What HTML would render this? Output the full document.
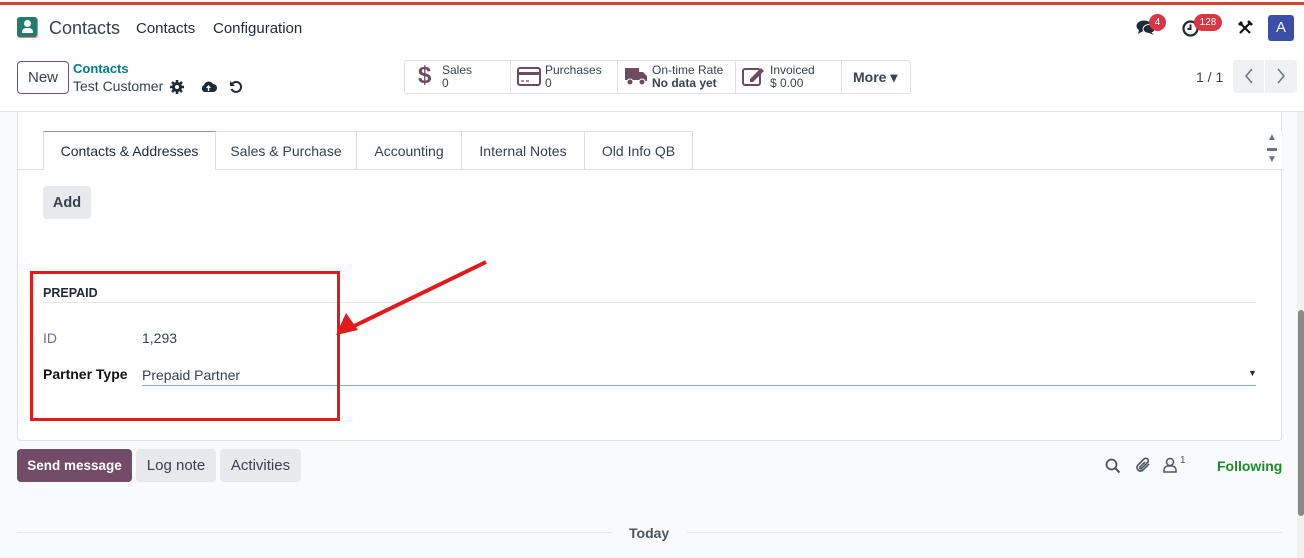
<!DOCTYPE html>
<html><head><meta charset="utf-8"><style>
*{box-sizing:border-box;margin:0;padding:0}
body{width:1304px;height:558px;overflow:hidden;background:#f9fafb;font-family:"Liberation Sans",sans-serif;color:#374151;position:relative;font-size:14px}
.a{position:absolute;white-space:nowrap}
.btn{position:absolute;border-radius:4px;display:flex;align-items:center;justify-content:center;font-size:14px}
</style></head><body>
<div class="a" style="left:0;top:0;width:1304px;height:112px;background:#fff;border-bottom:1px solid #dee2e6"></div>
<div class="a" style="left:0;top:2px;width:1304px;height:3px;background:#d9442e"></div>
<div class="a" style="left:17px;top:17px;width:21px;height:21px;background:#f07c7c;border-radius:3px"></div>
<div class="a" style="left:17px;top:17px;width:20px;height:20px;background:#1f7d6e;border-radius:3px"></div>
<div class="a" style="left:24px;top:20px;width:7px;height:7px;background:#fff;border-radius:50%"></div>
<div class="a" style="left:22px;top:28px;width:11px;height:5px;background:#fff;border-radius:4px 4px 1px 1px"></div>
<div class="a" style="left:49px;top:18px;font-size:18px;color:#374151">Contacts</div>
<div class="a" style="left:136px;top:20px;font-size:15px;color:#1f2937">Contacts</div>
<div class="a" style="left:213px;top:20px;font-size:15px;color:#1f2937">Configuration</div>
<svg class="a" style="left:1136px;top:19px" width="20" height="18" viewBox="0 0 20 18"><ellipse cx="8" cy="7" rx="7.5" ry="5.5" fill="#1f2937"/><path d="M3 11 L2 15 L7 12Z" fill="#1f2937"/><ellipse cx="13" cy="10" rx="6" ry="4.5" fill="#1f2937" stroke="#fff" stroke-width="1"/><path d="M15 13 L18 16 L13 14Z" fill="#1f2937"/></svg>
<div class="a" style="left:1149px;top:14px;width:17px;height:17px;border-radius:9px;background:#dc3545;color:#fff;font-size:10px;text-align:center;line-height:17px">4</div>
<svg class="a" style="left:1182px;top:20px" width="17" height="17" viewBox="0 0 17 17"><circle cx="8.5" cy="8.5" r="7" fill="none" stroke="#1f2937" stroke-width="2.2"/><path d="M8.5 4.5V9H5.5" fill="none" stroke="#1f2937" stroke-width="2"/></svg>
<div class="a" style="left:1194px;top:14px;width:28px;height:17px;border-radius:9px;background:#dc3545;color:#fff;font-size:10px;text-align:center;line-height:17px">128</div>
<svg class="a" style="left:1237px;top:20px" width="16" height="16" viewBox="0 0 16 16"><path d="M3 13L13 3" stroke="#111" stroke-width="2.2"/><path d="M11 1L15 5" stroke="#111" stroke-width="2.5"/><path d="M3 3L13 13" stroke="#111" stroke-width="2"/><path d="M1 4L4 1L6 3L3 6Z" fill="#111"/></svg>
<div class="a" style="left:1268px;top:15px;width:26px;height:26px;background:#3b4ea8;border-radius:3px;color:#fff;font-size:15px;text-align:center;line-height:26px">A</div>
<div class="btn" style="left:17px;top:61px;width:52px;height:33px;border:1px solid #7a5068;color:#374151;font-size:15px">New</div>
<div class="a" style="left:73px;top:61px;font-size:13px;font-weight:bold;color:#017e84">Contacts</div>
<div class="a" style="left:73px;top:78px;font-size:14px;color:#374151">Test Customer</div>
<svg class="a" style="left:170px;top:80px" width="14" height="14" viewBox="0 0 14 14"><circle cx="7" cy="7" r="5" fill="#1f2937"/><path d="M7 0V14M0 7H14M2 2L12 12M12 2L2 12" stroke="#1f2937" stroke-width="2.5"/><circle cx="7" cy="7" r="2" fill="#fff"/></svg>
<svg class="a" style="left:200px;top:80px" width="17" height="13" viewBox="0 0 17 13"><path d="M4 12A4 4 0 0 1 4 5A5 5 0 0 1 13 4A4 4 0 0 1 13 12Z" fill="#1f2937"/><path d="M8.5 5L6 8H7.8V11H9.2V8H11Z" fill="#fff"/></svg>
<svg class="a" style="left:229px;top:80px" width="14" height="14" viewBox="0 0 14 14"><path d="M3 4A5 5 0 1 1 2.5 9" fill="none" stroke="#1f2937" stroke-width="2"/><path d="M1 1V6H6Z" fill="#1f2937"/></svg>
<div class="a" style="left:404px;top:60px;width:507px;height:34px;border:1px solid #dee2e6;border-radius:3px;background:#fff"></div>
<div class="a" style="left:510px;top:61px;width:1px;height:32px;background:#dee2e6"></div>
<div class="a" style="left:617px;top:61px;width:1px;height:32px;background:#dee2e6"></div>
<div class="a" style="left:735px;top:61px;width:1px;height:32px;background:#dee2e6"></div>
<div class="a" style="left:841px;top:61px;width:1px;height:32px;background:#dee2e6"></div>
<div class="a" style="left:418px;top:62px;font-size:24px;font-weight:bold;color:#6e4a63">$</div>
<div class="a" style="left:442px;top:64px;font-size:12px;line-height:13px;color:#374151">Sales<br>0</div>
<svg class="a" style="left:517px;top:67px" width="24" height="19" viewBox="0 0 24 19"><rect x="1" y="1" width="22" height="17" rx="2" fill="none" stroke="#6e4a63" stroke-width="2"/><rect x="1" y="5" width="22" height="3" fill="#6e4a63"/><path d="M4 14H7M9 14H12" stroke="#6e4a63" stroke-width="1.3"/></svg>
<div class="a" style="left:545px;top:64px;font-size:12px;line-height:13px">Purchases<br>0</div>
<svg class="a" style="left:624px;top:67px" width="24" height="19" viewBox="0 0 24 19"><rect x="1" y="1" width="14" height="12" fill="#6e4a63"/><path d="M15 5H19L23 9V14H15Z" fill="#6e4a63"/><circle cx="6" cy="15" r="3" fill="#6e4a63" stroke="#fff"/><circle cx="18" cy="15" r="3" fill="#6e4a63" stroke="#fff"/></svg>
<div class="a" style="left:652px;top:64px;font-size:12px;line-height:13px">On-time Rate<br><b style="font-weight:600">No data yet</b></div>
<svg class="a" style="left:742px;top:66px" width="24" height="20" viewBox="0 0 24 20"><rect x="1" y="3" width="17" height="16" rx="2" fill="none" stroke="#6e4a63" stroke-width="2"/><path d="M8 13L19 2L22 5L11 16H8Z" fill="#6e4a63"/></svg>
<div class="a" style="left:770px;top:64px;font-size:12px;line-height:13px">Invoiced<br>$ 0.00</div>
<div class="a" style="left:853px;top:69px;font-size:14px;font-weight:bold;color:#374151">More ▾</div>
<div class="a" style="left:1196px;top:69px;font-size:14px">1 / 1</div>
<div class="a" style="left:1233px;top:60px;width:64px;height:33px;background:#eef0f2;border-radius:4px"></div>
<div class="a" style="left:1264px;top:60px;width:1px;height:33px;background:#fff"></div>
<svg class="a" style="left:1244px;top:68px" width="10" height="16" viewBox="0 0 10 16"><path d="M8 1L2 8L8 15" fill="none" stroke="#6b7280" stroke-width="1.5"/></svg>
<svg class="a" style="left:1276px;top:68px" width="10" height="16" viewBox="0 0 10 16"><path d="M2 1L8 8L2 15" fill="none" stroke="#6b7280" stroke-width="1.5"/></svg>
<div class="a" style="left:17px;top:112px;width:1265px;height:329px;background:#fff;border:1px solid #dee2e6;border-top:none;border-radius:0 0 4px 4px"></div>
<div class="a" style="left:18px;top:169px;width:1263px;height:1px;background:#dee2e6"></div>
<div class="a" style="left:43px;top:131px;width:173px;height:39px;background:#fff;border:1px solid #dee2e6;border-top-color:#a4899a;border-bottom:none;font-size:14px;color:#1f2937;text-align:center;line-height:39px">Contacts &amp; Addresses</div>
<div class="a" style="left:216px;top:131px;width:141px;height:38px;border-right:1px solid #dee2e6;border-top:1px solid #dee2e6;text-align:center;line-height:39px">Sales &amp; Purchase</div>
<div class="a" style="left:357px;top:131px;width:105px;height:38px;border-right:1px solid #dee2e6;border-top:1px solid #dee2e6;text-align:center;line-height:39px">Accounting</div>
<div class="a" style="left:462px;top:131px;width:123px;height:38px;border-right:1px solid #dee2e6;border-top:1px solid #dee2e6;text-align:center;line-height:39px">Internal Notes</div>
<div class="a" style="left:585px;top:131px;width:108px;height:38px;border-right:1px solid #dee2e6;border-top:1px solid #dee2e6;text-align:center;line-height:39px">Old Info QB</div>
<div class="a" style="left:1262px;top:131px;width:20px;height:38px;background:#fff"></div>
<div class="a" style="left:1267px;top:132px;font-size:10px;color:#6b7280;line-height:11px">▲<br>▬<br>▼</div>
<div class="btn" style="left:43px;top:186px;width:48px;height:33px;background:#e7e9ed;font-weight:bold;color:#374151;font-size:14.5px">Add</div>
<div class="a" style="left:43px;top:286px;font-size:12.5px;font-weight:bold;color:#1f2937">PREPAID</div>
<div class="a" style="left:43px;top:302px;width:1213px;height:1px;background:#e5e7eb"></div>
<div class="a" style="left:43px;top:330px;font-size:14px;color:#6b7280">ID</div>
<div class="a" style="left:142px;top:330px;font-size:14px">1,293</div>
<div class="a" style="left:43px;top:366px;font-size:14px;font-weight:bold;color:#111">Partner Type</div>
<div class="a" style="left:142px;top:367px;font-size:14px">Prepaid Partner</div>
<div class="a" style="left:142px;top:385px;width:1114px;height:1px;background:#7fb0b6"></div>
<div class="a" style="left:1248px;top:368px;font-size:9px;color:#1f2937">▼</div>
<div class="a" style="left:30px;top:271px;width:310px;height:150px;border:3px solid #e3191b"></div>
<svg class="a" style="left:330px;top:258px" width="160" height="80" viewBox="0 0 160 80"><path d="M156 4L20 70" stroke="#e3191b" stroke-width="4"/><path d="M6 77L16 55L28 72Z" fill="#e3191b"/></svg>
<div class="btn" style="left:17px;top:449px;width:115px;height:33px;background:#714b67;color:#fff;font-weight:bold;font-size:13.5px">Send message</div>
<div class="btn" style="left:136px;top:449px;width:80px;height:33px;background:#e7e9ed;color:#374151;font-size:15px">Log note</div>
<div class="btn" style="left:220px;top:449px;width:81px;height:33px;background:#e7e9ed;color:#374151;font-size:15px">Activities</div>
<svg class="a" style="left:1105px;top:458px" width="16" height="16" viewBox="0 0 16 16"><circle cx="6.5" cy="6.5" r="5" fill="none" stroke="#4b5563" stroke-width="1.8"/><path d="M10 10L14.5 14.5" stroke="#4b5563" stroke-width="2"/></svg>
<svg class="a" style="left:1135px;top:456px" width="17" height="18" viewBox="0 0 17 18"><path d="M14 8L8 14A3.5 3.5 0 0 1 3 9L9 3A2.3 2.3 0 0 1 12.5 6.5L6.5 12.5A1 1 0 0 1 5 11L10 6" fill="none" stroke="#4b5563" stroke-width="1.6"/></svg>
<svg class="a" style="left:1163px;top:457px" width="14" height="16" viewBox="0 0 14 16"><circle cx="7" cy="5" r="3.5" fill="none" stroke="#4b5563" stroke-width="1.5"/><path d="M1 15V13A4 4 0 0 1 5 9H9A4 4 0 0 1 13 13V15Z" fill="none" stroke="#4b5563" stroke-width="1.5"/></svg>
<div class="a" style="left:1180px;top:455px;font-size:10px;color:#4b5563">1</div>
<div class="a" style="left:1217px;top:458px;font-size:14px;font-weight:bold;color:#1e8a2a">Following</div>
<div class="a" style="left:17px;top:532px;width:595px;height:1px;background:#e5e7eb"></div>
<div class="a" style="left:687px;top:532px;width:595px;height:1px;background:#e5e7eb"></div>
<div class="a" style="left:629px;top:525px;font-size:14px;font-weight:bold;color:#4b5563">Today</div>
<div class="a" style="left:1297px;top:112px;width:7px;height:446px;background:#f1f1f1"></div>
<div class="a" style="left:1298px;top:310px;width:6px;height:206px;background:#8a8a8a;border-radius:3px"></div>
</body></html>
